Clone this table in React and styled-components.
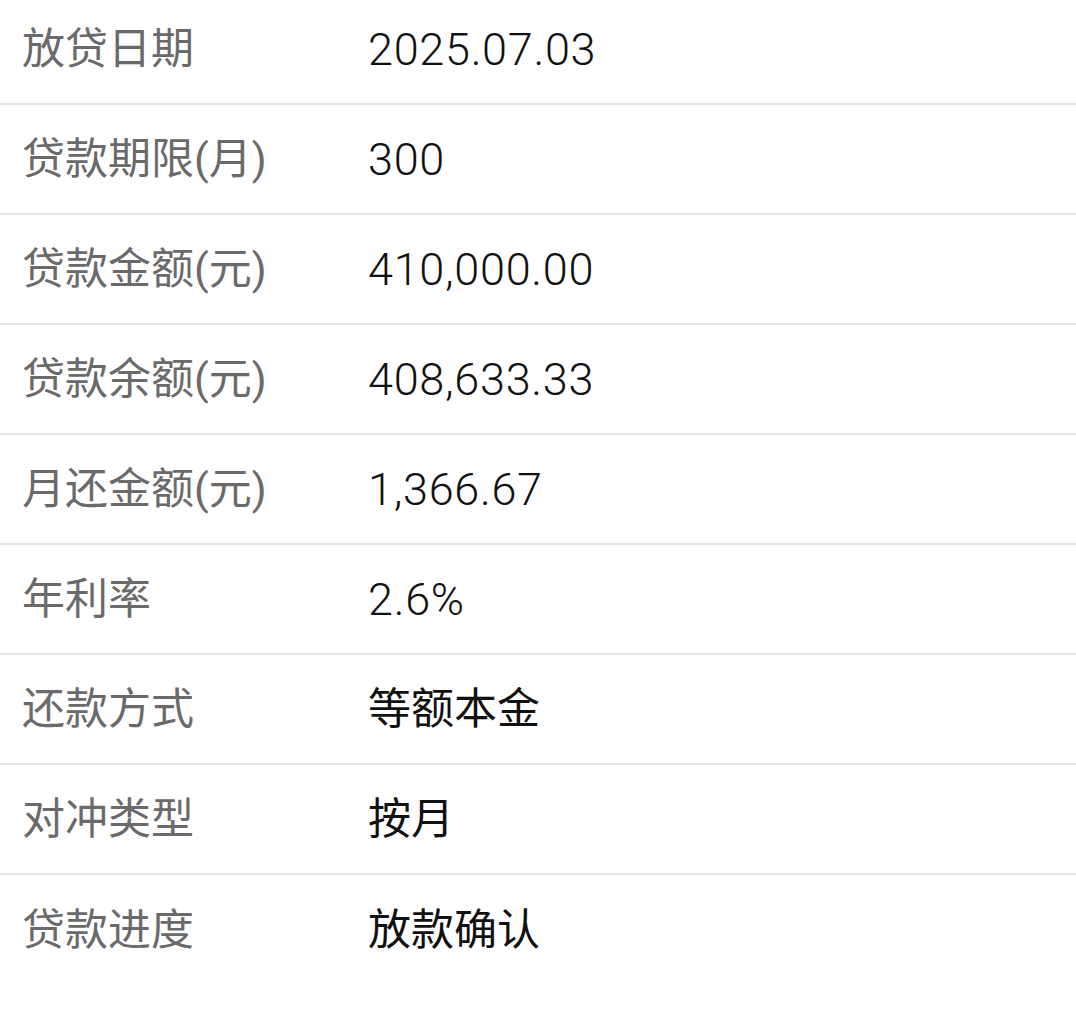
import React from 'react'
import styled, { createGlobalStyle } from 'styled-components'

const rows = [
  { label: '放贷日期', value: '2025.07.03', numeric: true },
  { label: '贷款期限(月)', value: '300', numeric: true },
  { label: '贷款金额(元)', value: '410,000.00', numeric: true },
  { label: '贷款余额(元)', value: '408,633.33', numeric: true },
  { label: '月还金额(元)', value: '1,366.67', numeric: true },
  { label: '年利率', value: '2.6%', numeric: true },
  { label: '还款方式', value: '等额本金' },
  { label: '对冲类型', value: '按月' },
  { label: '贷款进度', value: '放款确认' },
]

function App() {
  return (
    <>
      <GlobalStyle />
      <Page>
        <List>
          {rows.map((row, index) => (
            <Row key={index} last={index === rows.length - 1}>
              <Label>{row.label}</Label>
              <Value numeric={row.numeric}>{row.value}</Value>
            </Row>
          ))}
        </List>
      </Page>
    </>
  )
}

export default App

const GlobalStyle = createGlobalStyle`
html, body {
  margin: 0;
  padding: 0;
  background: #ffffff;
}
body {
  font-family: Roboto, "Noto Sans CJK SC", sans-serif;
}
`
const Page = styled.div`
width: 1076px;
height: 1012px;
overflow: hidden;
background: #ffffff;
`
const List = styled.div`
margin-top: -5px;
display: flex;
flex-direction: column;
`
const Row = styled.div`
display: grid;
grid-template-columns: 346px 1fr;
align-items: center;
height: 110px;
box-sizing: border-box;
padding-left: 22px;
border-bottom: ${props => props.last ? 'none' : '2px solid #e6e6e6'};
`
const Label = styled.div`
font-size: 43px;
color: #6a6a6a;
line-height: 1;
white-space: nowrap;
`
const Value = styled.div`
font-size: ${props => props.numeric ? '45px' : '43px'};
font-weight: ${props => props.numeric ? 300 : 400};
letter-spacing: ${props => props.numeric ? '0.7px' : '0'};
color: #111111;
line-height: 1;
white-space: nowrap;
`
